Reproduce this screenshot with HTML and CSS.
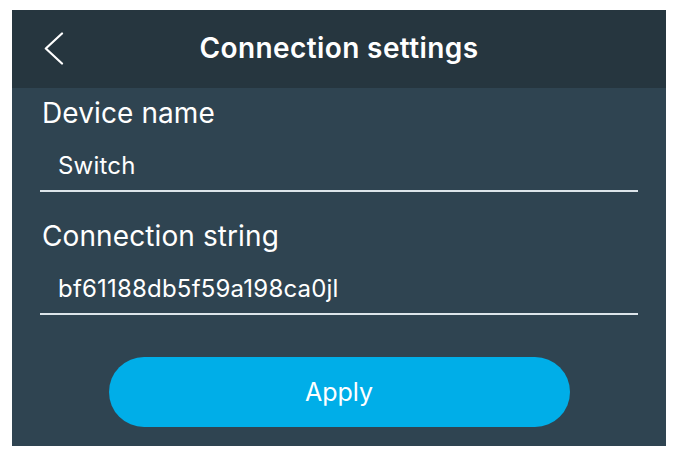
FILE: index.html
```html
<!DOCTYPE html>
<html>
<head>
<meta charset="utf-8">
<link rel="stylesheet" href="styles.css">
</head>
<body>
<div class="panel">
  <header class="header">
    <svg class="back" width="20" height="33" viewBox="0 0 20 33"><path d="M18 1.5 L1.8 16.5 L18 31.5" fill="none" stroke="#fff" stroke-width="2.2" stroke-linecap="round" stroke-linejoin="round"/></svg>
    <h1 class="title">Connection settings</h1>
  </header>
  <main class="content">
    <div class="field">
      <div class="label">Device name</div>
      <div class="value">Switch</div>
    </div>
    <div class="field">
      <div class="label">Connection string</div>
      <div class="value">bf61188db5f59a198ca0jl</div>
    </div>
    <div class="actions">
      <button class="apply">Apply</button>
    </div>
  </main>
</div>
</body>
</html>
```
FILE: styles.css
```css
html, body {
  margin: 0;
  padding: 0;
  background: #ffffff;
}
body {
  font-family: "Inter", "Liberation Sans", sans-serif;
  padding: 10px 0 0 12px;
}
.panel {
  width: 654px;
  height: 436px;
  background: #2f4451;
  display: flex;
  flex-direction: column;
}
.header {
  height: 78px;
  background: #26363f;
  display: flex;
  align-items: center;
  justify-content: center;
  position: relative;
}
.back {
  position: absolute;
  left: 32px;
  top: 22px;
}
.title {
  margin: 0 0 2px 0;
  color: #ffffff;
  font-size: 28px;
  font-weight: 600;
  line-height: 34px;
  letter-spacing: 0.4px;
}
.content {
  padding: 0 28px;
  display: flex;
  flex-direction: column;
}
.field {
  display: flex;
  flex-direction: column;
  margin-top: 8px;
}
.field + .field {
  margin-top: 27px;
}
.label {
  color: #ffffff;
  font-size: 28px;
  font-weight: 400;
  line-height: 34px;
  letter-spacing: 0.1px;
  padding-left: 2px;
}
.value {
  color: #ffffff;
  font-size: 24px;
  font-weight: 400;
  line-height: 32px;
  letter-spacing: 0.2px;
  margin-top: 20px;
  padding: 0 0 8px 18px;
  border-bottom: 2px solid #dde5ea;
}
.actions {
  display: flex;
  justify-content: center;
  margin-top: 42px;
}
.apply {
  width: 461px;
  height: 70px;
  border: none;
  border-radius: 35px;
  background: #00aee8;
  color: #ffffff;
  font-family: "Inter", "Liberation Sans", sans-serif;
  font-size: 25px;
  font-weight: 400;
  padding: 0;
}
```
